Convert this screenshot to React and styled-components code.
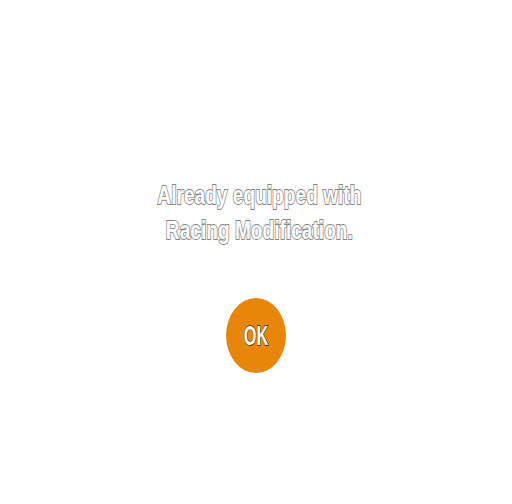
import React from "react";
import styled, { createGlobalStyle } from "styled-components";

const Global = createGlobalStyle`
  html, body { margin: 0; padding: 0; background: #fff; }
  #root { width: 512px; height: 504px; }
`;

const Page = styled.div`
  width: 512px;
  height: 504px;
  display: flex;
  flex-direction: column;
  align-items: center;
  padding-top: 178px;
  box-sizing: border-box;
  font-family: "Liberation Sans", Arial, sans-serif;
`;

const Message = styled.div`
  font-size: 25px;
  font-weight: 700;
  line-height: 35px;
  text-align: center;
  color: #fff;
  -webkit-text-stroke: 1.8px #858585;
  paint-order: stroke fill;
  transform: scaleX(0.765);
  white-space: nowrap;
  margin-left: 6px;
`;

const OkButton = styled.button`
  margin-top: 50px;
  width: 60px;
  height: 75px;
  border-radius: 50%;
  border: none;
  background: #e8860a;
  display: flex;
  align-items: center;
  justify-content: center;
  padding: 0;
  cursor: pointer;
`;

const OkLabel = styled.span`
  font-family: "Liberation Sans", Arial, sans-serif;
  font-weight: 700;
  font-size: 28px;
  color: #fff;
  -webkit-text-stroke: 1.4px #3a2200;
  paint-order: stroke fill;
  transform: scaleX(0.58);
  display: inline-block;
  margin-top: 1px;
`;

export default function App() {
  return (
    <>
      <Global />
      <Page>
        <Message>
          Already equipped with
          <br />
          Racing Modification.
        </Message>
        <OkButton>
          <OkLabel>OK</OkLabel>
        </OkButton>
      </Page>
    </>
  );
}
